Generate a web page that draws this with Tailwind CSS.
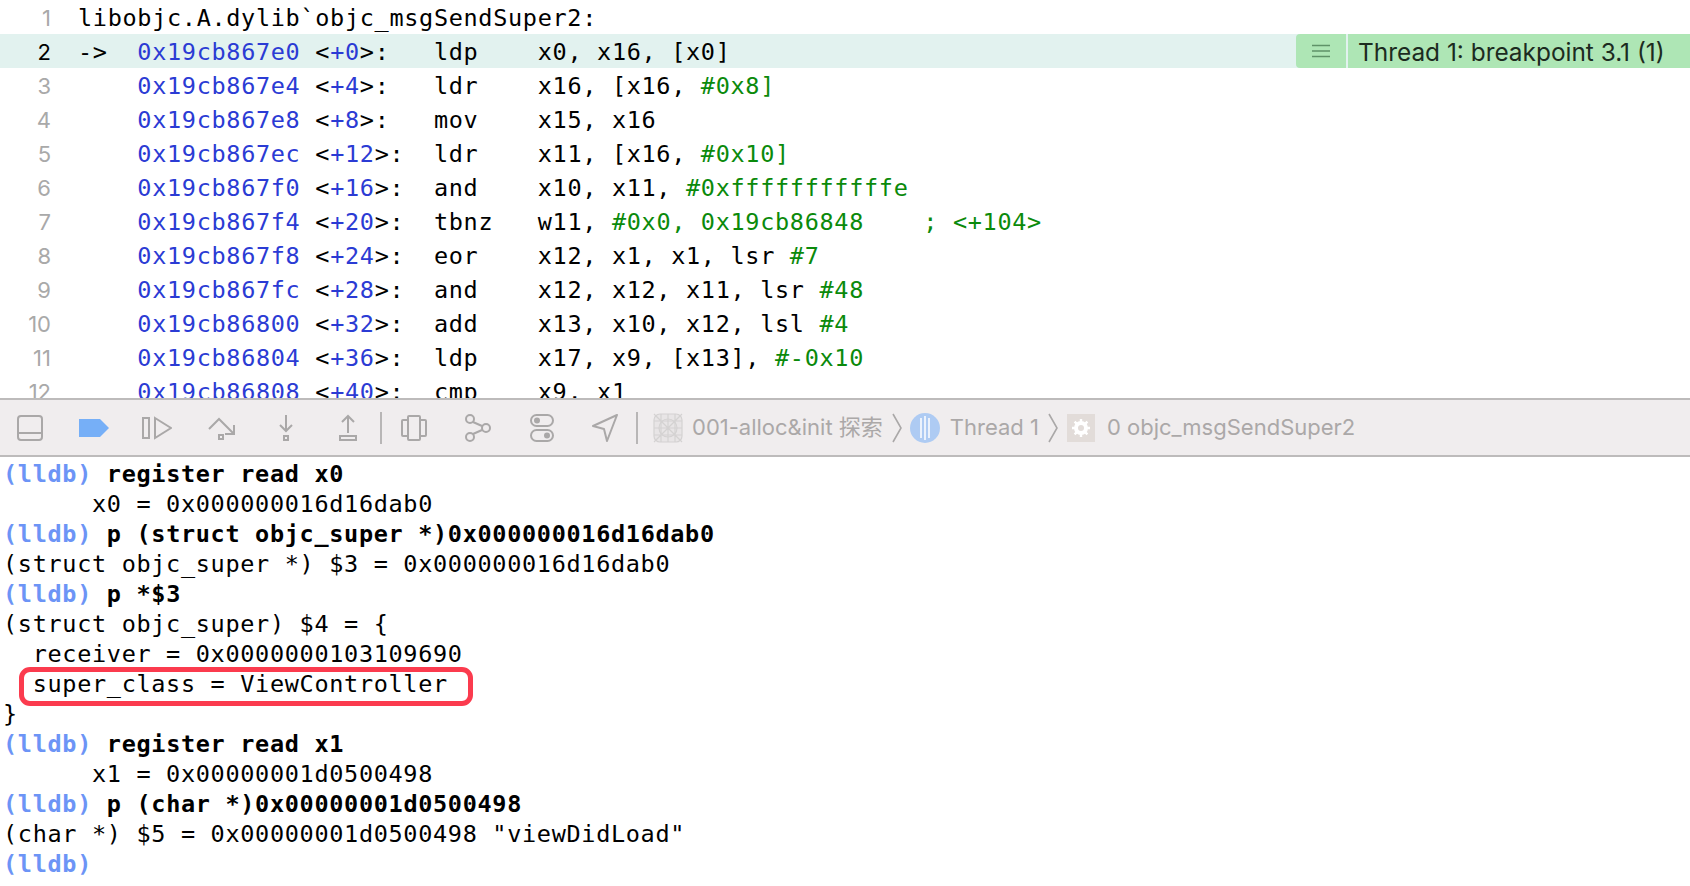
<!DOCTYPE html>
<html lang="en">
<head>
<meta charset="UTF-8">
<title>Xcode debugger</title>
<script src="https://cdn.jsdelivr.net/npm/@tailwindcss/browser@4"></script>
</head>
<body class="bg-white">
<div class="w-[1690px] h-[886px] overflow-hidden flex flex-col font-['DejaVu_Sans_Mono',monospace] text-[23.5px] tracking-[0.68px] text-black">

  <!-- disassembly -->
  <div class="h-[398px] overflow-hidden shrink-0">
    <div class="h-[34px] flex items-center"><span class="w-[52px] pt-[3px] pr-[1px] text-right font-['Inter',sans-serif] text-[22px] tracking-normal text-[#a9a9a9]">1</span><span class="ml-[26px] pt-[3px] whitespace-pre">libobjc.A.dylib`objc_msgSendSuper2:</span></div>
    <div class="h-[34px] flex items-center bg-[#e2f2ef]">
      <span class="w-[52px] pt-[3px] pr-[1px] text-right font-['Inter',sans-serif] text-[22px] tracking-normal text-black">2</span><span class="ml-[26px] pt-[3px] whitespace-pre">-&gt;  <span class="text-[#2b3bd4]">0x19cb867e0</span> &lt;<span class="text-[#2b3bd4]">+0</span>&gt;:   ldp    x0, x16, [x0]</span>
      <div class="ml-auto flex h-[34px] font-['Inter',sans-serif] tracking-normal">
        <div class="w-[50px] flex items-center justify-center bg-[#aee6b5] rounded-l-[4px] mr-[2px]">
          <svg width="18" height="14" viewBox="0 0 18 14" fill="none" stroke="#5f9268" stroke-width="1.5"><path d="M0 1.5h18M0 7h18M0 12.5h18"/></svg>
        </div>
        <div class="w-[342px] flex items-center pl-[10px] pt-[2px] bg-[#aee6b5] text-[#1c2b1f] text-[24.4px]">Thread 1: breakpoint 3.1 (1)</div>
      </div>
    </div>
    <div class="h-[34px] flex items-center"><span class="w-[52px] pt-[3px] pr-[1px] text-right font-['Inter',sans-serif] text-[22px] tracking-normal text-[#a9a9a9]">3</span><span class="ml-[26px] pt-[3px] whitespace-pre">    <span class="text-[#2b3bd4]">0x19cb867e4</span> &lt;<span class="text-[#2b3bd4]">+4</span>&gt;:   ldr    x16, [x16, <span class="text-[#0b8a0b]">#0x8]</span></span></div>
    <div class="h-[34px] flex items-center"><span class="w-[52px] pt-[3px] pr-[1px] text-right font-['Inter',sans-serif] text-[22px] tracking-normal text-[#a9a9a9]">4</span><span class="ml-[26px] pt-[3px] whitespace-pre">    <span class="text-[#2b3bd4]">0x19cb867e8</span> &lt;<span class="text-[#2b3bd4]">+8</span>&gt;:   mov    x15, x16</span></div>
    <div class="h-[34px] flex items-center"><span class="w-[52px] pt-[3px] pr-[1px] text-right font-['Inter',sans-serif] text-[22px] tracking-normal text-[#a9a9a9]">5</span><span class="ml-[26px] pt-[3px] whitespace-pre">    <span class="text-[#2b3bd4]">0x19cb867ec</span> &lt;<span class="text-[#2b3bd4]">+12</span>&gt;:  ldr    x11, [x16, <span class="text-[#0b8a0b]">#0x10]</span></span></div>
    <div class="h-[34px] flex items-center"><span class="w-[52px] pt-[3px] pr-[1px] text-right font-['Inter',sans-serif] text-[22px] tracking-normal text-[#a9a9a9]">6</span><span class="ml-[26px] pt-[3px] whitespace-pre">    <span class="text-[#2b3bd4]">0x19cb867f0</span> &lt;<span class="text-[#2b3bd4]">+16</span>&gt;:  and    x10, x11, <span class="text-[#0b8a0b]">#0xfffffffffffe</span></span></div>
    <div class="h-[34px] flex items-center"><span class="w-[52px] pt-[3px] pr-[1px] text-right font-['Inter',sans-serif] text-[22px] tracking-normal text-[#a9a9a9]">7</span><span class="ml-[26px] pt-[3px] whitespace-pre">    <span class="text-[#2b3bd4]">0x19cb867f4</span> &lt;<span class="text-[#2b3bd4]">+20</span>&gt;:  tbnz   w11, <span class="text-[#0b8a0b]">#0x0, 0x19cb86848    ; &lt;+104&gt;</span></span></div>
    <div class="h-[34px] flex items-center"><span class="w-[52px] pt-[3px] pr-[1px] text-right font-['Inter',sans-serif] text-[22px] tracking-normal text-[#a9a9a9]">8</span><span class="ml-[26px] pt-[3px] whitespace-pre">    <span class="text-[#2b3bd4]">0x19cb867f8</span> &lt;<span class="text-[#2b3bd4]">+24</span>&gt;:  eor    x12, x1, x1, lsr <span class="text-[#0b8a0b]">#7</span></span></div>
    <div class="h-[34px] flex items-center"><span class="w-[52px] pt-[3px] pr-[1px] text-right font-['Inter',sans-serif] text-[22px] tracking-normal text-[#a9a9a9]">9</span><span class="ml-[26px] pt-[3px] whitespace-pre">    <span class="text-[#2b3bd4]">0x19cb867fc</span> &lt;<span class="text-[#2b3bd4]">+28</span>&gt;:  and    x12, x12, x11, lsr <span class="text-[#0b8a0b]">#48</span></span></div>
    <div class="h-[34px] flex items-center"><span class="w-[52px] pt-[3px] pr-[1px] text-right font-['Inter',sans-serif] text-[22px] tracking-normal text-[#a9a9a9]">10</span><span class="ml-[26px] pt-[3px] whitespace-pre">    <span class="text-[#2b3bd4]">0x19cb86800</span> &lt;<span class="text-[#2b3bd4]">+32</span>&gt;:  add    x13, x10, x12, lsl <span class="text-[#0b8a0b]">#4</span></span></div>
    <div class="h-[34px] flex items-center"><span class="w-[52px] pt-[3px] pr-[1px] text-right font-['Inter',sans-serif] text-[22px] tracking-normal text-[#a9a9a9]">11</span><span class="ml-[26px] pt-[3px] whitespace-pre">    <span class="text-[#2b3bd4]">0x19cb86804</span> &lt;<span class="text-[#2b3bd4]">+36</span>&gt;:  ldp    x17, x9, [x13], <span class="text-[#0b8a0b]">#-0x10</span></span></div>
    <div class="h-[34px] flex items-center"><span class="w-[52px] pt-[3px] pr-[1px] text-right font-['Inter',sans-serif] text-[22px] tracking-normal text-[#a9a9a9]">12</span><span class="ml-[26px] pt-[3px] whitespace-pre">    <span class="text-[#2b3bd4]">0x19cb86808</span> &lt;<span class="text-[#2b3bd4]">+40</span>&gt;:  cmp    x9, x1</span></div>
  </div>

  <!-- debug bar -->
  <div class="h-[59px] shrink-0 border-y-2 border-[#bdbbbb] bg-[#f0edee] flex items-center font-['Inter','Noto_Sans_CJK_SC',sans-serif] tracking-normal text-[22px] text-[#aba8a8]">
    <svg class="ml-[16px] shrink-0" width="28" height="28" viewBox="0 0 28 28" fill="none" stroke="#aaa8a8" stroke-width="2"><rect x="2" y="2" width="24" height="24" rx="3"/><path d="M2 19h24"/></svg>
    <svg class="ml-[35px] shrink-0" width="30" height="18" viewBox="0 0 30 18"><path d="M0 0h21l9 9-9 9H0z" fill="#76aff7"/></svg>
    <svg class="ml-[33px] shrink-0" width="30" height="24" viewBox="0 0 30 24" fill="none" stroke="#aaa8a8" stroke-width="2"><rect x="1" y="2" width="6" height="20"/><path d="M13 2l16 10-16 10z"/></svg>
    <svg class="ml-[36px] shrink-0" width="28" height="26" viewBox="0 0 28 26" fill="none" stroke="#aaa8a8" stroke-width="2"><path d="M1 14l10-10 14 14"/><path d="M26 10v9h-9"/><rect x="11" y="20" width="4" height="4"/></svg>
    <svg class="ml-[42px] shrink-0" width="16" height="28" viewBox="0 0 16 28" fill="none" stroke="#aaa8a8" stroke-width="2"><path d="M8 1v16M2 11l6 6 6-6"/><rect x="6" y="22" width="4" height="4"/></svg>
    <svg class="ml-[44px] shrink-0" width="20" height="28" viewBox="0 0 20 28" fill="none" stroke="#aaa8a8" stroke-width="2"><path d="M10 19V2M4 8l6-6 6 6"/><rect x="2" y="22" width="16" height="4"/></svg>
    <div class="ml-[22px] w-[2px] h-[32px] bg-[#b8b6b6] shrink-0"></div>
    <svg class="ml-[19px] shrink-0" width="26" height="26" viewBox="0 0 26 26" fill="none" stroke="#aaa8a8" stroke-width="2"><rect x="7" y="1" width="12" height="24" rx="1"/><path d="M7 5H2a1 1 0 0 0-1 1v14a1 1 0 0 0 1 1h5M19 5h5a1 1 0 0 1 1 1v14a1 1 0 0 1-1 1h-5"/></svg>
    <svg class="ml-[37px] shrink-0" width="28" height="28" viewBox="0 0 28 28" fill="none" stroke="#aaa8a8" stroke-width="2"><circle cx="6" cy="5" r="4"/><circle cx="6" cy="23" r="4"/><circle cx="22" cy="14" r="4"/><path d="M9 8l9 4M9 20l9-4"/></svg>
    <svg class="ml-[38px] shrink-0" width="24" height="28" viewBox="0 0 24 28" fill="none" stroke="#aaa8a8" stroke-width="2"><rect x="1" y="1" width="22" height="11" rx="5.5"/><rect x="1" y="16" width="22" height="11" rx="5.5"/><circle cx="7" cy="6.5" r="3" fill="#aaa8a8" stroke="none"/><circle cx="17" cy="21.5" r="3" fill="#aaa8a8" stroke="none"/></svg>
    <svg class="ml-[38px] shrink-0" width="26" height="28" viewBox="0 0 26 28" fill="none" stroke="#aaa8a8" stroke-width="2"><path d="M25 1L1 12l11 3 3 12z" stroke-linejoin="round"/></svg>
    <div class="ml-[18px] w-[2px] h-[32px] bg-[#b8b6b6] shrink-0"></div>
    <svg class="ml-[15px] shrink-0" width="30" height="30" viewBox="0 0 30 30" fill="none" stroke="#d4d2d2" stroke-width="1.2"><rect x="1" y="1" width="28" height="28" rx="6" fill="#e8e5e6"/><path d="M1 8h28M1 15h28M1 22h28M8 1v28M15 1v28M22 1v28M1 1l28 28M29 1L1 29"/><circle cx="15" cy="15" r="9"/></svg>
    <span class="ml-[9px] whitespace-nowrap">001-alloc&amp;init 探索</span>
    <svg class="ml-[9px] shrink-0" width="10" height="30" viewBox="0 0 10 30" fill="none" stroke="#aaa8a8" stroke-width="1.6"><path d="M1 1l8 14-8 14"/></svg>
    <svg class="ml-[8px] shrink-0" width="30" height="30" viewBox="0 0 30 30"><circle cx="15" cy="15" r="15" fill="#aecbf3"/><path d="M11 5v20M15 3v24M19 5v20" stroke="#fff" stroke-width="1.5"/></svg>
    <span class="ml-[10px] whitespace-nowrap">Thread 1</span>
    <svg class="ml-[9px] shrink-0" width="10" height="30" viewBox="0 0 10 30" fill="none" stroke="#aaa8a8" stroke-width="1.6"><path d="M1 1l8 14-8 14"/></svg>
    <div class="ml-[9px] w-[28px] h-[28px] bg-[#e2dcd9] flex items-center justify-center shrink-0">
      <svg width="18" height="18" viewBox="0 0 18 18"><circle cx="9" cy="9" r="5" fill="none" stroke="#fff" stroke-width="4"/><path d="M9 0v4M9 14v4M0 9h4M14 9h4M2.6 2.6l3 3M12.4 12.4l3 3M15.4 2.6l-3 3M5.6 12.4l-3 3" stroke="#fff" stroke-width="2.4"/></svg>
    </div>
    <span class="ml-[12px] whitespace-nowrap">0 objc_msgSendSuper2</span>
  </div>

  <!-- lldb console -->
  <div class="pt-[2px] pl-[3px] leading-[30px]">
    <div class="whitespace-pre font-bold"><span class="text-[#6c94f6]">(lldb)</span> register read x0</div>
    <div class="whitespace-pre">      x0 = 0x000000016d16dab0</div>
    <div class="whitespace-pre font-bold"><span class="text-[#6c94f6]">(lldb)</span> p (struct objc_super *)0x000000016d16dab0</div>
    <div class="whitespace-pre">(struct objc_super *) $3 = 0x000000016d16dab0</div>
    <div class="whitespace-pre font-bold"><span class="text-[#6c94f6]">(lldb)</span> p *$3</div>
    <div class="whitespace-pre">(struct objc_super) $4 = {</div>
    <div class="whitespace-pre">  receiver = 0x0000000103109690</div>
    <div class="whitespace-pre relative">  super_class = ViewController<div class="absolute left-[16px] top-[-2px] w-[454px] h-[39px] border-[5px] border-[#fb3b4e] rounded-[11px]"></div></div>
    <div class="whitespace-pre">}</div>
    <div class="whitespace-pre font-bold"><span class="text-[#6c94f6]">(lldb)</span> register read x1</div>
    <div class="whitespace-pre">      x1 = 0x00000001d0500498</div>
    <div class="whitespace-pre font-bold"><span class="text-[#6c94f6]">(lldb)</span> p (char *)0x00000001d0500498</div>
    <div class="whitespace-pre">(char *) $5 = 0x00000001d0500498 "viewDidLoad"</div>
    <div class="whitespace-pre font-bold text-[#6c94f6]">(lldb)</div>
  </div>
</div>
</body>
</html>
